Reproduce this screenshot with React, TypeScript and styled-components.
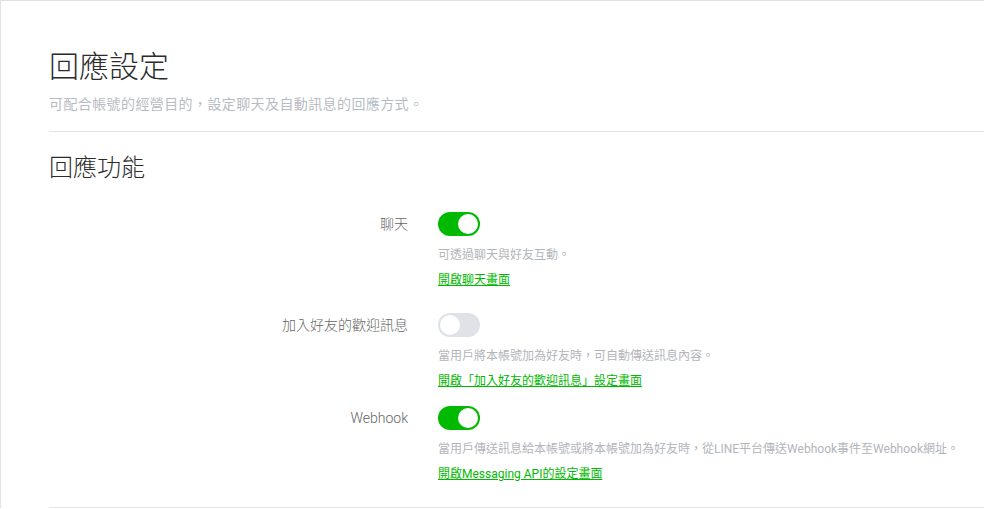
import styled, { createGlobalStyle } from "styled-components";
import React, { useState } from "react";

const GlobalStyle = createGlobalStyle`
  html, body {
    margin: 0;
    padding: 0;
    background: #fff;
  }
  body {
    font-family: Roboto, "Noto Sans CJK TC", sans-serif;
  }
`;

const Page = styled.div`
  border-top: 1px solid #dfe2e7;
  border-left: 1px solid #dfe2e7;
  min-height: 508px;
  padding: 0 0 0 48px;
  box-sizing: border-box;
`;

const Header = styled.div`
  padding-top: 46px;
  border-bottom: 1px solid #e4e4e4;
  padding-bottom: 17px;
`;

const Title = styled.h1`
  margin: 0;
  font-size: 30px;
  font-weight: 300;
  line-height: 40px;
  color: #2b2b2b;
`;

const Subtitle = styled.p`
  margin: 7px 0 0;
  font-size: 14px;
  line-height: 20px;
  color: #b7bcc4;
  letter-spacing: 0.4px;
`;

const Section = styled.section`
  padding-top: 19px;
  border-bottom: 1px solid #e4e4e4;
  padding-bottom: 24px;
`;

const SectionTitle = styled.h2`
  margin: 0 0 27px;
  font-size: 24px;
  font-weight: 300;
  line-height: 34px;
  color: #2b2b2b;
`;

const Row = styled.div<{ $gap: number }>`
  display: grid;
  grid-template-columns: 359px 1fr;
  column-gap: 30px;
  margin-bottom: ${(p) => p.$gap}px;
`;

const Label = styled.div`
  text-align: right;
  font-size: 14px;
  font-weight: 300;
  line-height: 24px;
  color: #666;
`;

const Body = styled.div`
  display: flex;
  flex-direction: column;
  align-items: flex-start;
`;

const Toggle = styled.button<{ $on: boolean }>`
  position: relative;
  width: 42px;
  height: 24px;
  border: none;
  padding: 0;
  border-radius: 12px;
  cursor: pointer;
  background: ${(p) => (p.$on ? "#00b900" : "#dfe2e7")};

  &::after {
    content: "";
    position: absolute;
    top: 2px;
    left: ${(p) => (p.$on ? "20px" : "2px")};
    width: 20px;
    height: 20px;
    border-radius: 50%;
    background: #fff;
  }
`;

const Desc = styled.p`
  margin: 10px 0 0;
  font-size: 12px;
  line-height: 18px;
  color: #b2b5bb;
`;

const Link = styled.a`
  margin-top: 7px;
  font-size: 12px;
  line-height: 18px;
  color: #00b900;
  text-decoration: underline;
  cursor: pointer;
`;

type Item = {
  label: string;
  on: boolean;
  desc: string;
  link: string;
  gap: number;
};

const items: Item[] = [
  {
    label: "聊天",
    on: true,
    desc: "可透過聊天與好友互動。",
    link: "開啟聊天畫面",
    gap: 24,
  },
  {
    label: "加入好友的歡迎訊息",
    on: false,
    desc: "當用戶將本帳號加為好友時，可自動傳送訊息內容。",
    link: "開啟「加入好友的歡迎訊息」設定畫面",
    gap: 16,
  },
  {
    label: "Webhook",
    on: true,
    desc: "當用戶傳送訊息給本帳號或將本帳號加為好友時，從LINE平台傳送Webhook事件至Webhook網址。",
    link: "開啟Messaging API的設定畫面",
    gap: 0,
  },
];

export default function App() {
  const [state, setState] = useState<boolean[]>(items.map((i) => i.on));

  return (
    <Page>
      <GlobalStyle />
      <Header>
        <Title>回應設定</Title>
        <Subtitle>可配合帳號的經營目的，設定聊天及自動訊息的回應方式。</Subtitle>
      </Header>
      <Section>
        <SectionTitle>回應功能</SectionTitle>
        {items.map((item, idx) => (
          <Row key={item.label} $gap={item.gap}>
            <Label>{item.label}</Label>
            <Body>
              <Toggle
                $on={state[idx]}
                onClick={() =>
                  setState((s) => s.map((v, i) => (i === idx ? !v : v)))
                }
              />
              <Desc>{item.desc}</Desc>
              <Link>{item.link}</Link>
            </Body>
          </Row>
        ))}
      </Section>
    </Page>
  );
}
